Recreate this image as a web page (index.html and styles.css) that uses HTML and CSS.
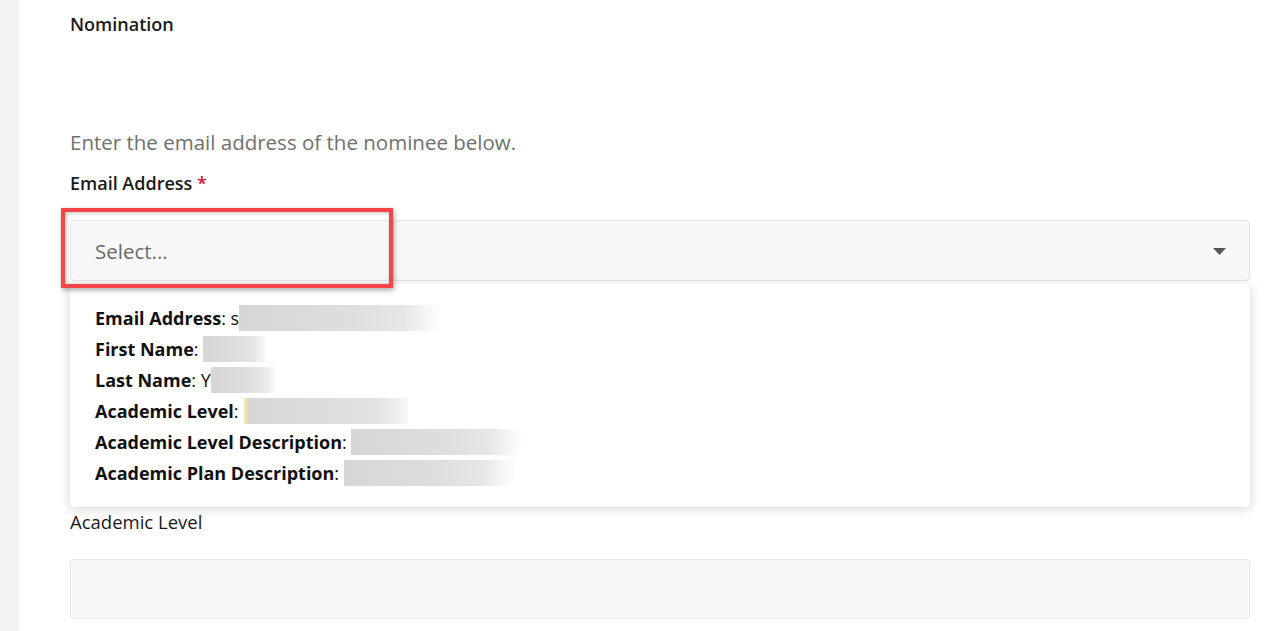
FILE: index.html
```html
<!DOCTYPE html>
<html lang="en">
<head>
<meta charset="utf-8">
<title>Nomination</title>
<link rel="stylesheet" href="styles.css">
</head>
<body>
<div class="page">
  <aside class="rail"></aside>
  <main class="main">
    <h2 class="section-title">Nomination</h2>
    <p class="intro">Enter the email address of the nominee below.</p>

    <div class="field">
      <label class="label">Email Address <span class="req">*</span></label>
      <div class="select-wrap">
        <div class="select">
          <span class="placeholder">Select...</span>
          <svg class="caret" width="13" height="7" viewBox="0 0 13 7"><path d="M0 0 H13 L6.5 7 Z" fill="#555"/></svg>
        </div>
        <div class="highlight"></div>
        <div class="menu">
          <div class="row"><b>Email Address</b>: s<span class="blur" style="width:204px"></span></div>
          <div class="row"><b>First Name</b>: <span class="blur" style="width:64px"></span></div>
          <div class="row"><b>Last Name</b>: Y<span class="blur" style="width:66px"></span></div>
          <div class="row"><b>Academic Level</b>: <span class="blur yellow" style="width:161px"></span></div>
          <div class="row"><b>Academic Level Description</b>: <span class="blur" style="width:171px"></span></div>
          <div class="row"><b>Academic Plan Description</b>: <span class="blur" style="width:172px"></span></div>
        </div>
      </div>
    </div>

    <div class="field field-next">
      <label class="label label-plain">Academic Level</label>
      <div class="input"></div>
    </div>
  </main>
</div>
</body>
</html>
```

FILE: styles.css
```css
* { box-sizing: border-box; }
html, body { margin: 0; padding: 0; background: #fff; }
body {
  font-family: "Open Sans", "Noto Sans", "Liberation Sans", sans-serif;
  color: #1a1a1a;
  height: 631px;
  overflow: hidden;
}
.page { display: flex; min-height: 631px; }
.rail { width: 19px; background: #f2f2f2; flex: none; }
.main { flex: 1; padding: 12px 30px 0 51px; }

.section-title {
  margin: 0;
  font-size: 18px;
  line-height: 24px;
  font-weight: 600;
}
.intro {
  margin: 92px 0 0;
  font-size: 20.5px;
  line-height: 28px;
  color: #6f6f6f;
}
.field { margin-top: 15px; }
.label {
  display: block;
  font-size: 18px;
  line-height: 24px;
  font-weight: 600;
}
.label-plain { font-weight: 500; font-size: 18.5px; }
.req { color: #d0103a; }

.select-wrap { position: relative; margin-top: 25px; }
.select {
  height: 61px;
  background: #f8f8f8;
  border: 1px solid #e6e6e6;
  border-radius: 4px;
  display: flex;
  align-items: center;
  justify-content: space-between;
  padding: 0 23px 0 24px;
}
.placeholder { font-size: 20.5px; color: #6b6b6b; }
.caret { display: block; margin-top: 1px; }

.highlight {
  position: absolute;
  left: -9px;
  top: -12px;
  width: 332px;
  height: 80px;
  border: 4px solid #f44448;
  box-shadow: 1px 2px 5px rgba(0,0,0,0.35), inset 1px 1px 4px rgba(0,0,0,0.25);
  z-index: 3;
}
.menu {
  position: absolute;
  left: 0;
  right: 0;
  top: calc(100% + 3px);
  height: 223px;
  background: #fff;
  border-radius: 4px;
  box-shadow: 0 2px 12px rgba(0,0,0,0.16);
  padding: 19px 25px 0;
  z-index: 2;
}
.row {
  font-size: 18px;
  line-height: 31px;
  color: #111;
  white-space: nowrap;
}
.row b { font-weight: 700; }
.blur {
  display: inline-block;
  height: 26px;
  vertical-align: middle;
  margin-top: -4px;
  filter: blur(0.6px);
  background: linear-gradient(90deg, #d6d6d6 0%, #dedede 55%, #e6e6e6 80%, rgba(240,240,240,0) 100%);
}
.blur.yellow {
  margin-left: 4px;
  background: linear-gradient(90deg, #d6d6d6 0%, #dedede 55%, #e2e2e2 80%, rgba(240,240,240,0.6) 100%);
  box-shadow: -3px 0 0 #f3e6b6;
}

.field-next { margin-top: 229px; }
.input {
  margin-top: 25px;
  height: 60px;
  background: #f8f8f8;
  border: 1px solid #e8e8e8;
  border-radius: 4px;
}
```
